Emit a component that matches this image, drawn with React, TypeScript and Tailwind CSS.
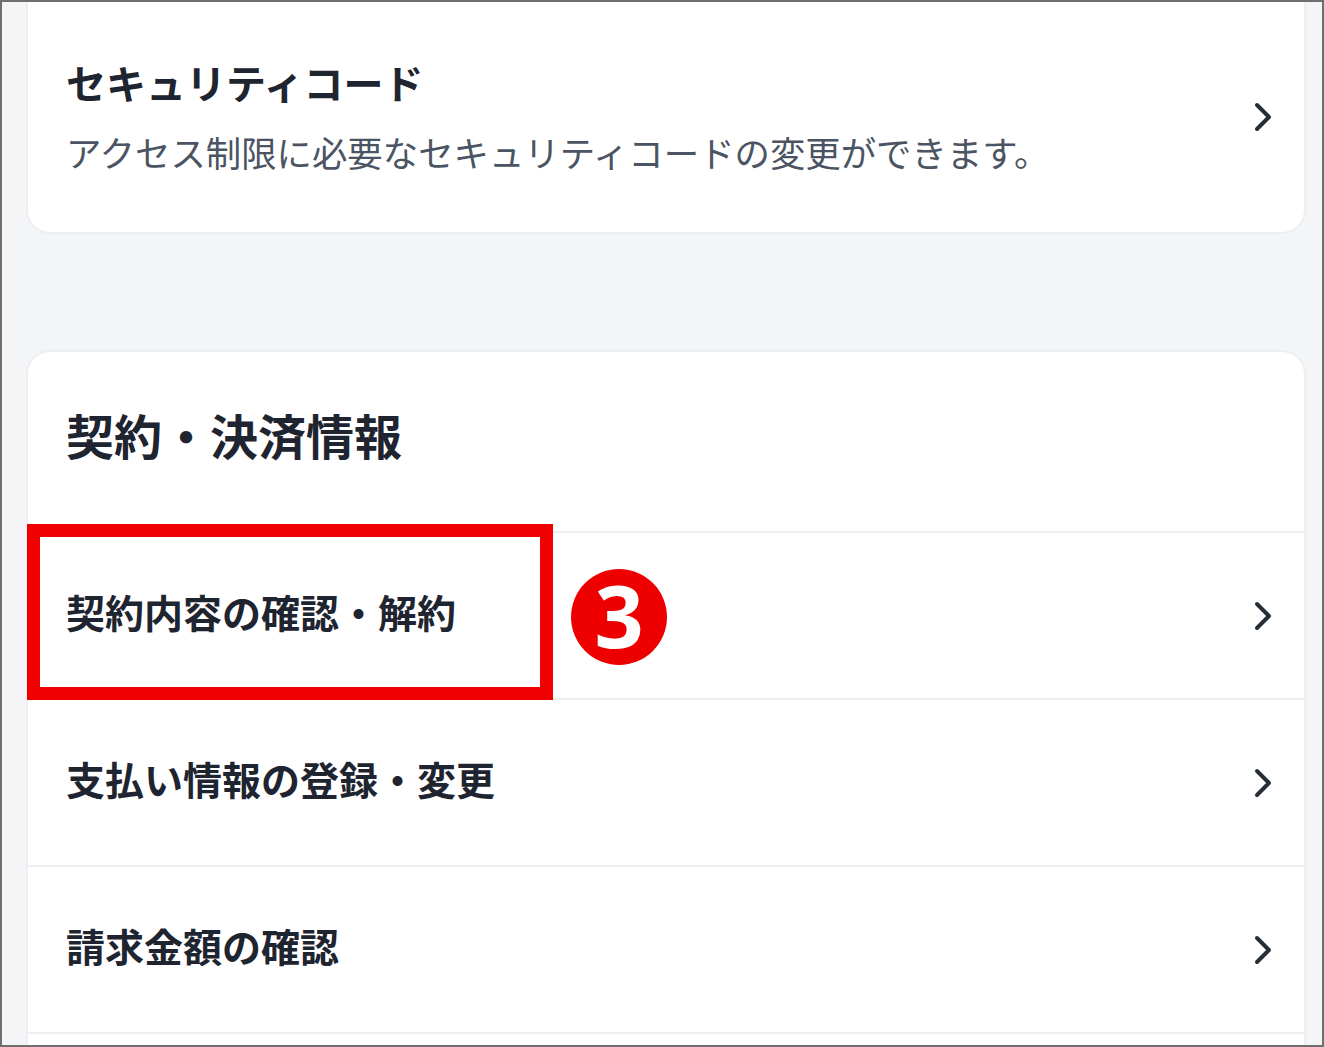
import React from 'react';

const font = { fontFamily: '"Noto Sans CJK JP", "Noto Sans", sans-serif' };

const Chevron: React.FC = () => (
  <svg width="20" height="30" viewBox="0 0 20 30" className="shrink-0">
    <polyline
      points="3,3 15,15 3,27"
      fill="none"
      stroke="#262e38"
      strokeWidth="4"
      strokeLinecap="round"
      strokeLinejoin="round"
    />
  </svg>
);

const rows = ['契約内容の確認・解約', '支払い情報の登録・変更', '請求金額の確認'];

export default function App() {
  return (
    <div
      className="w-[1324px] h-[1047px] overflow-hidden border-2 border-[#6f6f6f] bg-[#f4f5f7]"
      style={font}
    >
      {/* Security code card (top cut off) */}
      <div className="ml-[24px] w-[1280px] h-[232px] bg-white rounded-b-[24px] border-x-2 border-b-2 border-[#eceef1] flex items-center pl-[38px] pr-[30px]">
        <div className="flex-1">
          <div className="text-[40px] leading-[50px] font-bold text-[#1f2530]">セキュリティコード</div>
          <div className="mt-[20px] text-[35.4px] leading-[50px] text-[#4b5462]">
            アクセス制限に必要なセキュリティコードの変更ができます。
          </div>
        </div>
        <Chevron />
      </div>

      {/* Contract / payment card */}
      <div className="relative mt-[116px] ml-[24px] w-[1280px] bg-white rounded-t-[24px] border-x-2 border-t-2 border-[#eceef1]">
        <div className="h-[179px] flex items-center pl-[38px] pb-[16px]">
          <div className="text-[48px] font-bold text-[#1f2530]">契約・決済情報</div>
        </div>
        {rows.map((label) => (
          <div
            key={label}
            className="h-[167px] border-t-2 border-[#eceef1] flex items-center pl-[38px] pr-[30px]"
          >
            <div className="flex-1 text-[39px] font-bold text-[#1f2530] pb-[8px]">{label}</div>
            <Chevron />
          </div>
        ))}
        <div className="h-[40px] border-t-2 border-[#eceef1]" />

        {/* annotation overlays */}
        <div className="absolute left-[-1px] top-[172px] w-[526px] h-[176px] border-[13px] border-[#f00000]" />
        <div className="absolute left-[543px] top-[217px] w-[96px] h-[96px] rounded-full bg-[#ee0000] flex items-center justify-center">
          <span
            className="text-white font-bold text-[86px] leading-none -mt-[4px]"
            style={{ fontFamily: '"Noto Sans", "Open Sans", sans-serif' }}
          >
            3
          </span>
        </div>
      </div>
    </div>
  );
}
